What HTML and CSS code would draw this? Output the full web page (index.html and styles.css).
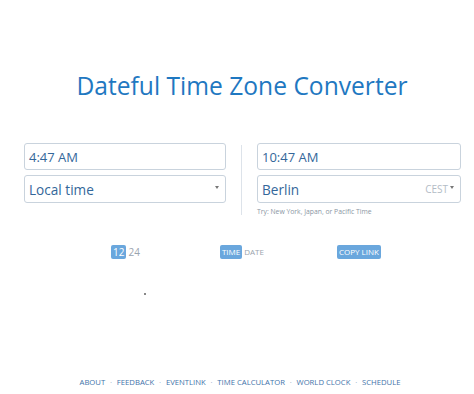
FILE: index.html
```html
<!DOCTYPE html>
<html>
<head>
<meta charset="utf-8">
<link rel="stylesheet" href="styles.css">
</head>
<body>
<div class="page">
  <h1 class="title">Dateful Time Zone Converter</h1>
  <div class="converter">
    <div class="col">
      <div class="field">4:47 AM</div>
      <div class="field select"><span class="val">Local time</span><span class="caret"></span></div>
    </div>
    <div class="divider"></div>
    <div class="col col-right">
      <div class="field">10:47 AM</div>
      <div class="field select"><span class="val">Berlin</span><span class="abbr">CEST</span><span class="caret"></span></div>
      <div class="hint">Try: New York, Japan, or Pacific Time</div>
    </div>
  </div>
  <div class="controls">
    <div class="toggle t-hours"><span class="on">12</span><span class="off">24</span></div>
    <div class="toggle t-mode"><span class="on">TIME</span><span class="off">DATE</span></div>
    <div class="toggle t-copy"><span class="on">COPY LINK</span></div>
  </div>
  <div class="dotrow"><span class="dot"></span></div>
  <div class="footer">
    <a>ABOUT</a><span class="sep">·</span><a>FEEDBACK</a><span class="sep">·</span><a>EVENTLINK</a><span class="sep">·</span><a>TIME CALCULATOR</a><span class="sep">·</span><a>WORLD CLOCK</a><span class="sep">·</span><a>SCHEDULE</a>
  </div>
</div>
</body>
</html>
```
FILE: styles.css
```css
html, body {
  margin: 0;
  padding: 0;
  background: #ffffff;
}
body {
  font-family: "Open Sans", "Noto Sans", sans-serif;
  width: 474px;
  height: 394px;
  overflow: hidden;
}
.page {
  display: flex;
  flex-direction: column;
}
.title {
  margin: 66px 0 0 0;
  padding-left: 10px;
  height: 40px;
  line-height: 40px;
  font-size: 24.6px;
  font-weight: 400;
  color: #1f78c1;
  text-align: center;
}
.converter {
  display: flex;
  margin: 37px 13px 0 24px;
}
.col {
  width: 202px;
  display: flex;
  flex-direction: column;
  gap: 5px;
}
.col-right {
  width: 204px;
}
.divider {
  width: 1px;
  background: #dde3ea;
  margin: 2px 15px 0 15px;
  height: 70px;
}
.field {
  box-sizing: border-box;
  height: 27px;
  border: 1px solid #c9d3dd;
  border-radius: 3px;
  padding: 0 4px;
  display: flex;
  align-items: center;
  font-size: 13px;
  color: #34679a;
}
.select {
  height: 28px;
  font-size: 13.6px;
}
.select .val {
  flex: 1;
}
.abbr {
  font-size: 10px;
  color: #b3bcc6;
  margin-right: 2px;
}
.caret {
  width: 0;
  height: 0;
  border-left: 2.5px solid transparent;
  border-right: 2.5px solid transparent;
  border-top: 3px solid #777;
  margin-right: 2px;
  margin-top: -3px;
}
.hint {
  font-size: 6.8px;
  color: #8a96a3;
  margin-top: -1px;
}
.controls {
  display: flex;
  margin-top: 29px;
  height: 14px;
  align-items: center;
  font-size: 8px;
}
.toggle {
  display: flex;
  align-items: center;
}
.t-hours { margin-left: 111px; font-size: 10px; }
.t-mode { margin-left: 78px; }
.t-copy { margin-left: 71px; }
.on {
  background: #6aa7dd;
  color: #ffffff;
  border-radius: 2px;
  padding: 2px 2px;
  line-height: 10px;
}
.off {
  color: #9aa4ae;
  padding: 2px 2px;
  line-height: 10px;
}
.dotrow {
  height: 8px;
  margin-top: 34px;
  padding-left: 144px;
}
.dot {
  display: block;
  width: 2px;
  height: 2px;
  background: #888;
}
.footer {
  margin-top: 76px;
  padding-left: 6px;
  text-align: center;
  font-size: 7.7px;
  color: #3f74aa;
  letter-spacing: 0;
}
.footer .sep {
  color: #8aa3bd;
  margin: 0 4.8px;
}
```
